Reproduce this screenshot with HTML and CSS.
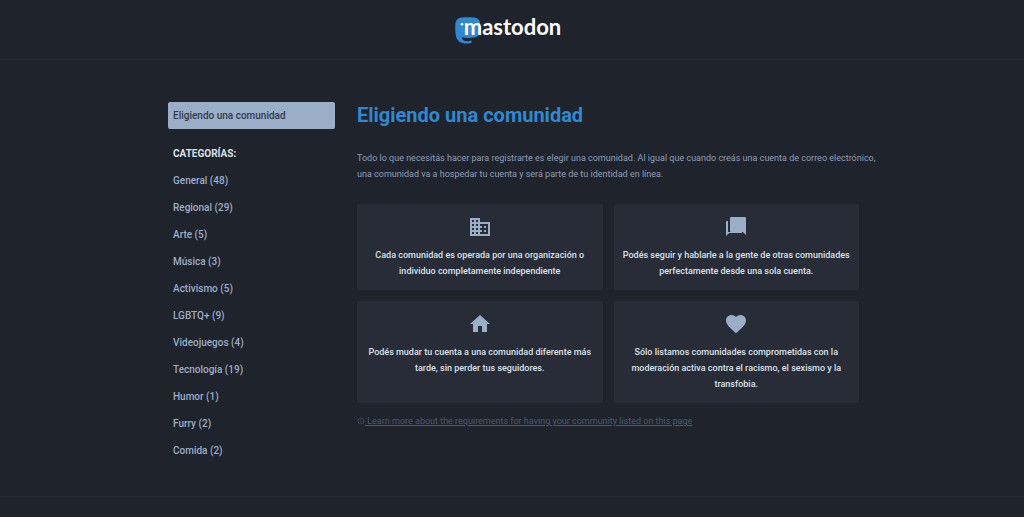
FILE: index.html
```html
<!DOCTYPE html>
<html lang="es">
<head>
<meta charset="utf-8">
<meta name="viewport" content="width=device-width, initial-scale=1">
<title>Mastodon - Eligiendo una comunidad</title>
<link rel="stylesheet" href="styles.css">
</head>
<body>
<header class="header">
  <a class="logo" href="#" aria-label="mastodon">
    <svg class="logo-mark" viewBox="0 0 26 27" aria-hidden="true">
      <path fill="#2f88d2" d="M25 5.500C24.600 2.800 22.300 1 19.400.600 16 .100 9 .100 6 .600 3 1.100.900 3.200.500 6 .100 9.500.100 13.500.600 17c.600 4.700 2.400 7.900 6.800 9.100 3 .800 6 .700 9.200-.400v-2.200c-2.600.800-5.400.900-7.200.300-1.500-.500-2.400-1.700-2.500-3.500 3.800.900 8.300 1 12.200.300 3.300-.600 5.400-2.300 5.800-5.600.400-3.200.500-6.500.100-9.500z"/>
      <circle cx="7" cy="7.300" r="1.300" fill="#fff"/>
    </svg>
    <span class="logo-text">mastodon</span>
  </a>
</header>
<div class="container">
  <nav class="sidebar" aria-label="Categorías">
    <a class="nav-link active" href="#" aria-current="page">Eligiendo una comunidad</a>
    <h2 class="nav-title">CATEGORÍAS:</h2>
    <ul class="nav-list">
      <li><a class="nav-link" href="#">General (48)</a></li>
      <li><a class="nav-link" href="#">Regional (29)</a></li>
      <li><a class="nav-link" href="#">Arte (5)</a></li>
      <li><a class="nav-link" href="#">Música (3)</a></li>
      <li><a class="nav-link" href="#">Activismo (5)</a></li>
      <li><a class="nav-link" href="#">LGBTQ+ (9)</a></li>
      <li><a class="nav-link" href="#">Videojuegos (4)</a></li>
      <li><a class="nav-link" href="#">Tecnología (19)</a></li>
      <li><a class="nav-link" href="#">Humor (1)</a></li>
      <li><a class="nav-link" href="#">Furry (2)</a></li>
      <li><a class="nav-link" href="#">Comida (2)</a></li>
    </ul>
  </nav>
  <main class="content">
    <h1 class="title">Eligiendo una comunidad</h1>
    <p class="lead">Todo lo que necesitás hacer para registrarte es elegir una comunidad. Al igual que cuando creás una cuenta de correo electrónico, una comunidad va a hospedar tu cuenta y será parte de tu identidad en línea.</p>
    <div class="cards">
      <section class="card">
        <svg class="card-icon" viewBox="0 0 24 24" aria-hidden="true"><path d="M12 7V3H2v18h20V7H12zM6 19H4v-2h2v2zm0-4H4v-2h2v2zm0-4H4V9h2v2zm0-4H4V5h2v2zm4 12H8v-2h2v2zm0-4H8v-2h2v2zm0-4H8V9h2v2zm0-4H8V5h2v2zm10 12h-8v-2h2v-2h-2v-2h2v-2h-2V9h8v10zm-2-8h-2v2h2v-2zm0 4h-2v2h2v-2z"/></svg>
        <p class="card-text">Cada comunidad es operada por una organización o individuo completamente independiente</p>
      </section>
      <section class="card">
        <svg class="card-icon" viewBox="0 0 24 24" aria-hidden="true"><path d="M21 2H7c-.600 0-1 .400-1 1v13c0 .600.400 1 1 1h12l3 3V3c0-.600-.400-1-1-1zM4 6H3c-.600 0-1 .400-1 1v14l3-3h12c.600 0 1-.400 1-1H4V6z"/></svg>
        <p class="card-text">Podés seguir y hablarle a la gente de otras comunidades perfectamente desde una sola cuenta.</p>
      </section>
      <section class="card">
        <svg class="card-icon" viewBox="0 0 24 24" aria-hidden="true"><path d="M10 20v-6h4v6h5v-8h3L12 3 2 12h3v8z"/></svg>
        <p class="card-text">Podés mudar tu cuenta a una comunidad diferente más tarde, sin perder tus seguidores.</p>
      </section>
      <section class="card">
        <svg class="card-icon" viewBox="0 0 24 24" aria-hidden="true"><path d="M12 21.350l-1.450-1.320C5.400 15.360 2 12.280 2 8.500 2 5.420 4.420 3 7.500 3c1.740 0 3.410.810 4.500 2.090C13.090 3.810 14.760 3 16.500 3 19.580 3 22 5.420 22 8.500c0 3.780-3.400 6.860-8.550 11.540L12 21.350z"/></svg>
        <p class="card-text">Sólo listamos comunidades comprometidas con la moderación activa contra el racismo, el sexismo y la transfobia.</p>
      </section>
    </div>
    <a class="more" href="#"><svg class="more-icon" viewBox="0 0 24 24" aria-hidden="true"><path d="M11 17h2v-6h-2v6zm1-15C6.480 2 2 6.480 2 12s4.480 10 10 10 10-4.480 10-10S17.520 2 12 2zm0 18c-4.410 0-8-3.590-8-8s3.590-8 8-8 8 3.590 8 8-3.590 8-8 8zM11 9h2V7h-2v2z"/></svg> Learn more about the requirements for having your community listed on this page</a>
  </main>
</div>
<footer class="footer"></footer>
</body>
</html>
```
FILE: styles.css
```css
* { box-sizing: border-box; }
body {
  margin: 0;
  min-height: 100vh;
  display: flex;
  flex-direction: column;
  background: #1f232b;
  color: #9baec8;
  font-family: Roboto, "Liberation Sans", sans-serif;
}
h1, h2, p, ul { margin: 0; padding: 0; }
a { color: inherit; text-decoration: none; }
.header {
  display: flex;
  justify-content: center;
  padding: 16px 8px 14px 0;
  border-bottom: 1px solid #282c37;
}
.logo { display: flex; height: 29px; }
.logo-mark { width: 26px; height: 27px; margin-top: 1px; }
.logo-text {
  margin-left: -17px;
  color: #fff;
  font: 700 22px/22px Lato, sans-serif;
}
.container {
  display: grid;
  grid-template-columns: 167fr 502fr;
  gap: 22px;
  width: 100%;
  max-width: 694px;
  margin: 0 auto;
  padding: 42px 0 32px 3px;
}
.sidebar { font-weight: 500; }
.nav-link, .nav-title {
  display: block;
  padding: 0 5px;
  font-size: 10px;
  line-height: 27px;
}
.nav-link.active {
  margin-bottom: 11px;
  background: #9baec8;
  color: #323a4b;
  border-radius: 2px;
}
.nav-title { color: #d9e1e8; font-weight: 700; }
.nav-list { list-style: none; }
.title {
  color: #2f88d2;
  font-size: 20px;
  font-weight: 700;
  line-height: 27px;
}
.lead { margin: 21px -20px 22px 0; color: #8d9eb7; font-size: 9px; line-height: 16px; }
.cards { display: grid; grid-template-columns: 1fr 1fr; gap: 11px; }
.card {
  padding: 11px 8px;
  background: #282c37;
  border-radius: 2px;
  text-align: center;
}
.card-icon { display: block; width: 24px; height: 24px; margin: 0 auto 8px; fill: #9baec8; }
.card-text {
  color: #d9e1e8;
  font-size: 9px;
  font-weight: 500;
  line-height: 16px;
}
.more {
  display: block;
  margin-top: 10px;
  color: #4b5971;
  font-size: 9px;
  line-height: 16px;
  text-decoration: underline;
}
.more-icon { width: 8px; height: 8px; fill: currentColor; vertical-align: -1px; }
.footer { flex: 1; border-top: 1px solid #282c37; }
```
